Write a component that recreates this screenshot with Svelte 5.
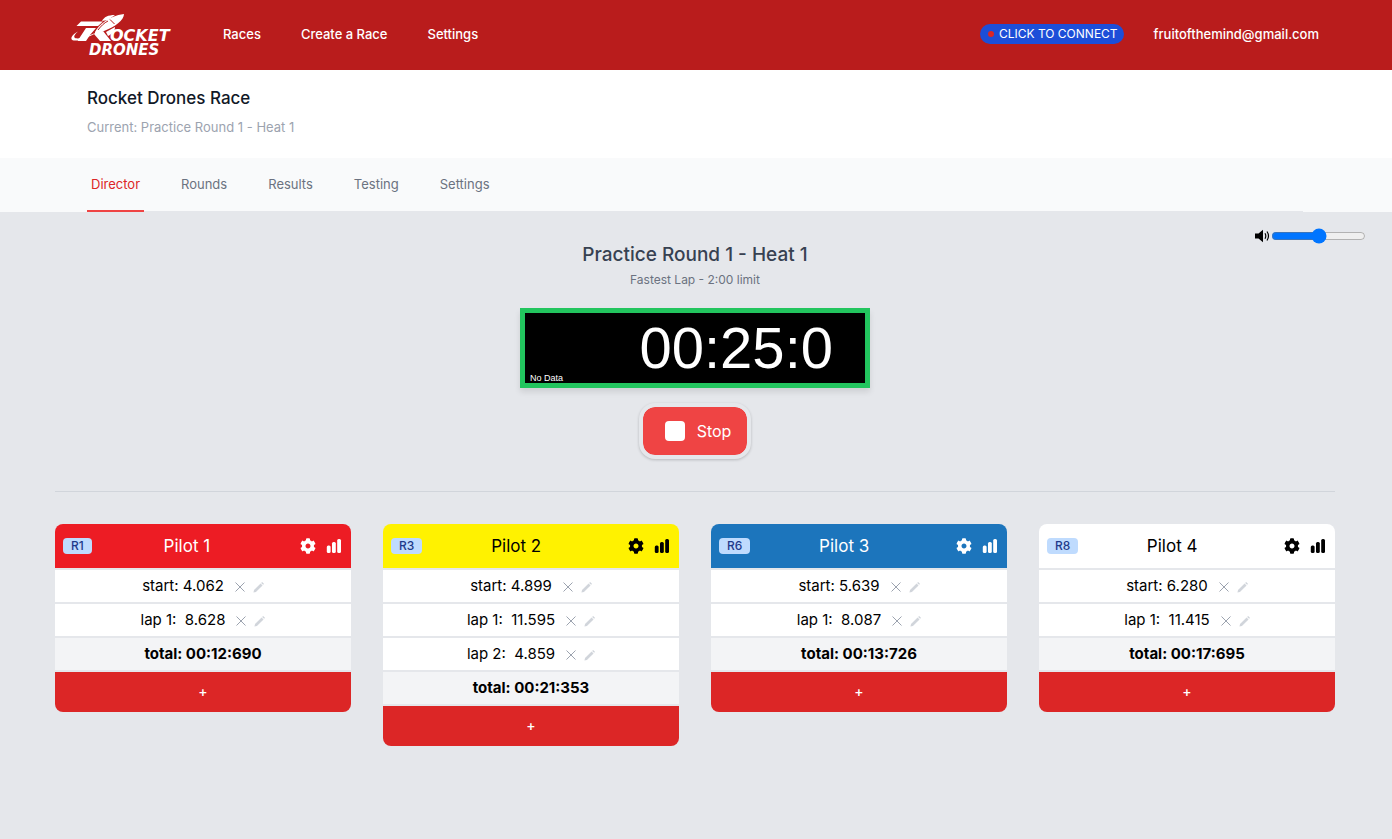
<script>
  const navLinks = ['Races', 'Create a Race', 'Settings'];
  const tabs = ['Director', 'Rounds', 'Results', 'Testing', 'Settings'];
  const pilots = [
    { name: 'Pilot 1', channel: 'R1', theme: 'red', start: '4.062', laps: ['8.628'], total: '00:12:690' },
    { name: 'Pilot 2', channel: 'R3', theme: 'yellow', start: '4.899', laps: ['11.595', '4.859'], total: '00:21:353' },
    { name: 'Pilot 3', channel: 'R6', theme: 'blue', start: '5.639', laps: ['8.087'], total: '00:13:726' },
    { name: 'Pilot 4', channel: 'R8', theme: 'white', start: '6.280', laps: ['11.415'], total: '00:17:695' }
  ];
  let volume = $state(50);
</script>

{#snippet rowActions()}
  <button class="row-action close" aria-label="Delete">
    <svg width="10" height="10" viewBox="0 0 10 10"><path d="M.5 .5l9 9M9.500 .5l-9 9" fill="none" stroke="currentColor" /></svg>
  </button>
  <button class="row-action edit" aria-label="Edit">
    <svg width="11" height="11" viewBox="0 0 12 12"><path d="M.5 11.500l.6-2.700L8.300 1.600l2.100 2.100L3.200 10.900zM8.900 1l.7-.7q.4-.3.8 0l1.300 1.300q.3.400 0 .8l-.7.7z" fill="currentColor" /></svg>
  </button>
{/snippet}

<header class="topbar">
  <a class="logo" href="#home" aria-label="Rocket Drones home">
    <svg width="106" height="48" viewBox="0 0 106 48" fill="#fff">
      <path d="M10 11.500h22l-5 4.500H5.500z" />
      <path d="M15 18h10l-6 7-4 6H6.500z" />
      <path d="M23 24l9-3 8 10H29z" />
      <path d="M24 22C28 15 37 6 53 4c0 6-9 13-20 17l-9 4z" />
      <path d="M31 11c2-4 6-6 13-6l-7 5z" />
      <path d="M35 22l9-5c0 4-3 7-7 9z" />
      <path d="M7 21.500C2 24 0 27 .5 29c1.500 4 15 0 28-8-12 6-23 9-25 6.500-1-1.500.5-3.500 3.500-6z" />
      <path d="M27 20c3-4 6-7 10-9" fill="none" stroke="#b91c1c" stroke-width="1" />
      <path d="M39 9.500l4.500 4.500" fill="none" stroke="#b91c1c" stroke-width="1" />
      <text x="39" y="31" class="logo-top">OCKET</text>
      <text x="18" y="45" class="logo-bottom">DRONES</text>
    </svg>
  </a>
  <nav class="main-nav">
    {#each navLinks as link}<a href="#{link}">{link}</a>{/each}
  </nav>
  <button class="connect"><span class="dot"></span>CLICK TO CONNECT</button>
  <a class="account" href="#account">fruitofthemind@gmail.com</a>
</header>

<section class="race-head">
  <h1>Rocket Drones Race</h1>
  <p>Current: Practice Round 1 - Heat 1</p>
</section>

<div class="tabs-bar">
  <nav class="tabs">
    {#each tabs as tab, i}<a href="#{tab}" class:active={i === 0}>{tab}</a>{/each}
  </nav>
</div>

<main>
  <section class="heat">
    <div class="heat-center">
      <h2>Practice Round 1 - Heat 1</h2>
      <p>Fastest Lap - 2:00 limit</p>
      <div class="timer">
        <span class="no-data">No Data</span>
        <span class="time">00:25:0</span>
      </div>
      <button class="stop"><span class="square"></span>Stop</button>
    </div>
    <label class="volume">
      <svg width="15" height="14" viewBox="0 0 15 14" role="img" aria-label="Volume">
        <path d="M0 4.500h3.500L8 .8v12.400L3.500 9.500H0z" />
        <path d="M10 4.300q1.600 2.700 0 5.400M12 2.500q3 4.500 0 9" fill="none" stroke="#000" stroke-width="1.200" />
      </svg>
      <input type="range" min="0" max="100" bind:value={volume} />
    </label>
  </section>

  <section class="pilots">
    {#each pilots as pilot}
      <article class="card">
        <header class={pilot.theme}>
          <span class="channel">{pilot.channel}</span>
          <h3>{pilot.name}</h3>
          <div class="tools">
            <button aria-label="Pilot settings">
              <svg width="16" height="16" viewBox="0 0 512 512" fill="currentColor"><path d="M487.4 315.7l-42.6-24.6c4.3-23.2 4.3-47 0-70.2l42.6-24.6c4.900-2.800 7.100-8.600 5.500-14-11.100-35.600-30-67.800-54.700-94.600-3.800-4.100-10-5.100-14.800-2.300L380.800 110c-17.900-15.400-38.500-27.300-60.800-35.100V25.800c0-5.600-3.900-10.500-9.400-11.700-36.700-8.200-74.300-7.800-109.200 0-5.500 1.200-9.400 6.100-9.400 11.700V75c-22.200 7.900-42.800 19.800-60.800 35.100L88.700 85.500c-4.900-2.800-11-1.900-14.800 2.300-24.700 26.700-43.600 58.900-54.700 94.600-1.700 5.400.6 11.200 5.500 14L67.300 221c-4.300 23.200-4.300 47 0 70.200l-42.600 24.600c-4.900 2.800-7.100 8.600-5.500 14 11.100 35.600 30 67.800 54.700 94.600 3.800 4.100 10 5.100 14.800 2.300l42.600-24.600c17.900 15.400 38.500 27.300 60.800 35.100v49.200c0 5.600 3.900 10.500 9.400 11.700 36.700 8.200 74.300 7.800 109.200 0 5.500-1.200 9.400-6.100 9.400-11.700v-49.200c22.200-7.900 42.800-19.800 60.800-35.100l42.600 24.600c4.900 2.800 11 1.900 14.800-2.300 24.700-26.700 43.600-58.900 54.700-94.600 1.500-5.500-.7-11.300-5.600-14.100zM256 336c-44.100 0-80-35.900-80-80s35.900-80 80-80 80 35.900 80 80-35.900 80-80 80z" /></svg>
            </button>
            <button aria-label="Pilot statistics">
              <svg width="16" height="16" viewBox="0 0 16 16" fill="currentColor"><rect x=".8" y="7.500" width="3.800" height="7.500" rx="1.500" /><rect x="6" y="4" width="3.800" height="11" rx="1.500" /><rect x="11.200" y="1" width="3.800" height="14" rx="1.500" /></svg>
            </button>
          </div>
        </header>
        <div class="row"><span>start: {pilot.start}</span>{@render rowActions()}</div>
        {#each pilot.laps as lap, i}
          <div class="row"><span>lap {i + 1}:&nbsp; {lap}</span>{@render rowActions()}</div>
        {/each}
        <div class="row total">total: {pilot.total}</div>
        <button class="add">+</button>
      </article>
    {/each}
  </section>
</main>

<style>
  :global(body) {
    margin: 0;
    background: #e5e7eb;
    font-family: Inter, 'Liberation Sans', sans-serif;
    font-size: 13px;
    line-height: 20px;
    color: #000;
  }
  h1, h2, h3, p { margin: 0; font-weight: 400; }
  a { color: inherit; text-decoration: none; }
  button { border: 0; padding: 0; background: none; color: inherit; font: inherit; cursor: pointer; }
  svg { display: block; }

  .topbar {
    display: flex;
    align-items: center;
    height: 70px;
    box-sizing: border-box;
    padding: 0 73px 3px 71px;
    background: #b91c1c;
    color: #fff;
    font-weight: 500;
  }
  .logo-top, .logo-bottom { font-family: 'DejaVu Sans', sans-serif; font-weight: 700; font-style: italic; }
  .logo-top { font-size: 16px; }
  .logo-bottom { font-size: 15px; }
  .main-nav { display: flex; gap: 40px; margin-left: 46px; flex: 1; }
  .connect {
    display: flex;
    align-items: center;
    height: 20px;
    padding: 0 6px 0 8px;
    border-radius: 10px;
    background: #1d4ed8;
    font-size: 12px;
    font-weight: 400;
  }
  .dot { width: 6px; height: 6px; margin-right: 5px; border-radius: 50%; background: #dc2626; }
  .account { margin-left: 30px; }

  .race-head { box-sizing: border-box; height: 88px; padding: 16px 89px 0 87px; background: #fff; }
  .race-head h1 { font-size: 17px; line-height: 24px; font-weight: 500; color: #111827; }
  .race-head p { margin-top: 8px; line-height: 18px; color: #9ca3af; }

  .tabs-bar { padding: 0 89px 0 87px; background: #f9fafb; }
  .tabs { display: flex; gap: 33px; border-bottom: 1px solid #e5e7eb; color: #6b7280; }
  .tabs a { padding: 16px 4px; border-bottom: 2px solid transparent; margin-bottom: -1px; }
  .tabs a.active { color: #dc2626; border-color: #ef4444; }

  .heat { display: grid; grid-template-columns: 1fr auto 1fr; padding: 16px 26px 0 24px; }
  .heat-center { grid-column: 2; display: flex; flex-direction: column; align-items: center; padding-top: 13px; }
  .heat h2 { font-size: 19px; line-height: 28px; font-weight: 500; color: #374151; }
  .heat p { margin-top: 3px; font-size: 12px; line-height: 16px; color: #6b7280; }
  .timer {
    box-sizing: border-box;
    display: flex;
    justify-content: space-between;
    align-items: flex-end;
    width: 350px;
    height: 80px;
    margin-top: 20px;
    padding: 0 32px 0 5px;
    border: 5px solid #22c55e;
    background: #000;
    color: #fff;
    font-family: 'Liberation Sans', Arial, sans-serif;
    box-shadow: 0 4px 6px rgb(0 0 0 / 0.1);
  }
  .no-data { font-size: 9px; line-height: 10px; }
  .time { font-size: 58px; line-height: 70px; }
  .stop {
    display: flex;
    align-items: center;
    gap: 12px;
    height: 56px;
    margin-top: 15px;
    padding: 0 16px 0 22px;
    border: 4px solid #e5e7eb;
    border-radius: 16px;
    background: #ef4444;
    background-clip: padding-box;
    color: #fff;
    font-size: 16px;
    box-shadow: 0 1px 3px rgb(0 0 0 / 0.2);
  }
  .square { width: 20px; height: 20px; border-radius: 4px; background: #fff; }
  .volume { display: flex; align-items: center; justify-self: end; gap: 1px; height: 16px; }
  .volume input { width: 95px; margin: 0; }

  .pilots {
    display: grid;
    grid-template-columns: repeat(4, 1fr);
    gap: 32px;
    align-items: start;
    margin: 32px 57px 0 55px;
    padding-top: 32px;
    border-top: 1px solid #d1d5db;
  }
  .card { display: flex; flex-direction: column; gap: 2px; border-radius: 8px; overflow: hidden; }
  .card header { display: flex; align-items: center; justify-content: space-between; height: 44px; padding: 0 9px 0 8px; }
  .red { background: #ed1c24; color: #fff; }
  .yellow { background: #fff200; }
  .blue { background: #1c75bc; color: #fff; }
  .white { background: #fff; }
  .channel { padding: 0 8px; border-radius: 4px; background: #bfdbfe; color: #1e3a8a; font-size: 12px; line-height: 16px; font-weight: 500; }
  h3 { font-size: 17px; line-height: 28px; }
  .tools { display: flex; justify-content: flex-end; gap: 10px; width: 60px; }
  .row { display: flex; align-items: center; justify-content: center; height: 32px; background: #fff; font-size: 15px; }
  .total { background: #f3f4f6; font-weight: 700; }
  .row-action { padding-top: 2px; }
  .close { margin-left: 11px; color: #9ca3af; }
  .edit { margin-left: 8px; color: #d1d5db; }
  .add { height: 40px; background: #dc2626; color: #fff; font-size: 14px; font-weight: 500; }
</style>
